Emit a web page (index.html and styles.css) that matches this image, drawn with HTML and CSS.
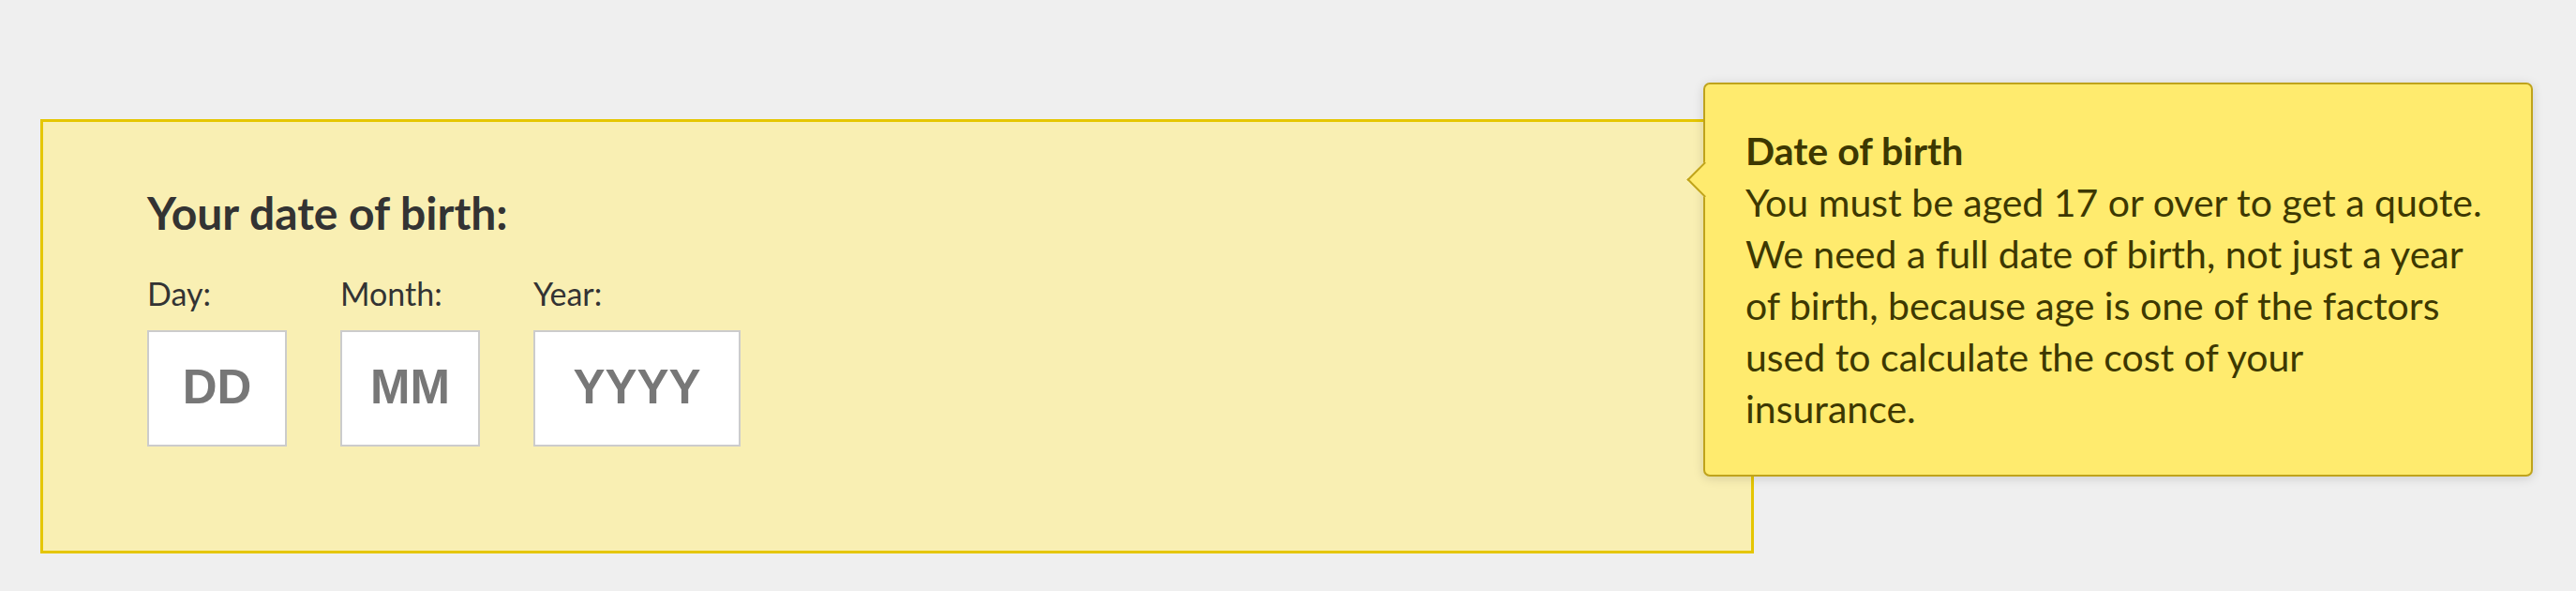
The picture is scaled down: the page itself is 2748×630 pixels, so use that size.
FILE: index.html
```html
<!DOCTYPE html>
<html lang="en">
<head>
    <meta charset="UTF-8">
    <meta name="viewport" content="width=device-width, initial-scale=1.0">
    <title>Your date of birth</title>
    <link rel="stylesheet" href="styles.css">
</head>
<body>

    <div class="page">
        <!-- Date of birth question -->
        <div class="dob-panel">
            <h2>Your date of birth:</h2>
            <div class="dob-fields">
                <div class="field field-day">
                    <label for="dob-day">Day:</label>
                    <input type="text" id="dob-day" placeholder="DD">
                </div>
                <div class="field field-month">
                    <label for="dob-month">Month:</label>
                    <input type="text" id="dob-month" placeholder="MM">
                </div>
                <div class="field field-year">
                    <label for="dob-year">Year:</label>
                    <input type="text" id="dob-year" placeholder="YYYY">
                </div>
            </div>
        </div>

        <!-- Help tooltip -->
        <div class="tooltip">
            <strong>Date of birth</strong>
            <p>You must be aged 17 or over to get a quote.<br>
            We need a full date of birth, not just a year<br>
            of birth, because age is one of the factors<br>
            used to calculate the cost of your<br>
            insurance.</p>
        </div>
    </div>

</body>
</html>
```

FILE: styles.css
```css
/* General Reset */
* {
    margin: 0;
    padding: 0;
    box-sizing: border-box;
}

body {
    font-family: 'Lato', 'Noto Sans', sans-serif;
    background-color: #efefef;
    color: #333;
    height: 630px;
    overflow: hidden;
}

.page {
    position: relative;
    padding: 127px 0 0 43px;
}

/* Question panel */
.dob-panel {
    width: 1828px;
    background-color: #f9efb3;
    border: 3px solid #e5c600;
    padding: 68px 0 111px 111px;
}

.dob-panel h2 {
    font-size: 48px;
    line-height: 58px;
    font-weight: 700;
    color: #333;
    margin-bottom: 36px;
}

.dob-fields {
    display: flex;
    gap: 57px;
}

.field {
    display: flex;
    flex-direction: column;
}

.field label {
    font-size: 34px;
    line-height: 41px;
    color: #333;
    margin-bottom: 19px;
}

.field input {
    width: 149px;
    height: 124px;
    border: 2px solid #ccc;
    background-color: #fff;
    font-family: 'Liberation Sans', Arial, sans-serif;
    font-size: 51px;
    font-weight: 700;
    color: #333;
    text-align: center;
    padding-bottom: 4px;
    outline: none;
}

.field input::placeholder {
    color: #777;
    opacity: 1;
}

.field-year input {
    width: 221px;
}

/* Help tooltip */
.tooltip {
    position: absolute;
    top: 88px;
    left: 1817px;
    width: 885px;
    height: 420px;
    background-color: #ffeb6e;
    border: 2px solid #bfa31c;
    border-radius: 7px;
    box-shadow: 0 2px 12px rgba(0, 0, 0, 0.14);
    padding: 43px;
    color: #3d3800;
    font-size: 41px;
    line-height: 55px;
    white-space: nowrap;
}

.tooltip::before {
    content: '';
    position: absolute;
    left: -14px;
    top: 88px;
    width: 25px;
    height: 25px;
    background-color: #ffeb6e;
    border-left: 2px solid #bfa31c;
    border-bottom: 2px solid #bfa31c;
    transform: rotate(45deg);
}

.tooltip strong {
    display: block;
    font-weight: 700;
}
```
